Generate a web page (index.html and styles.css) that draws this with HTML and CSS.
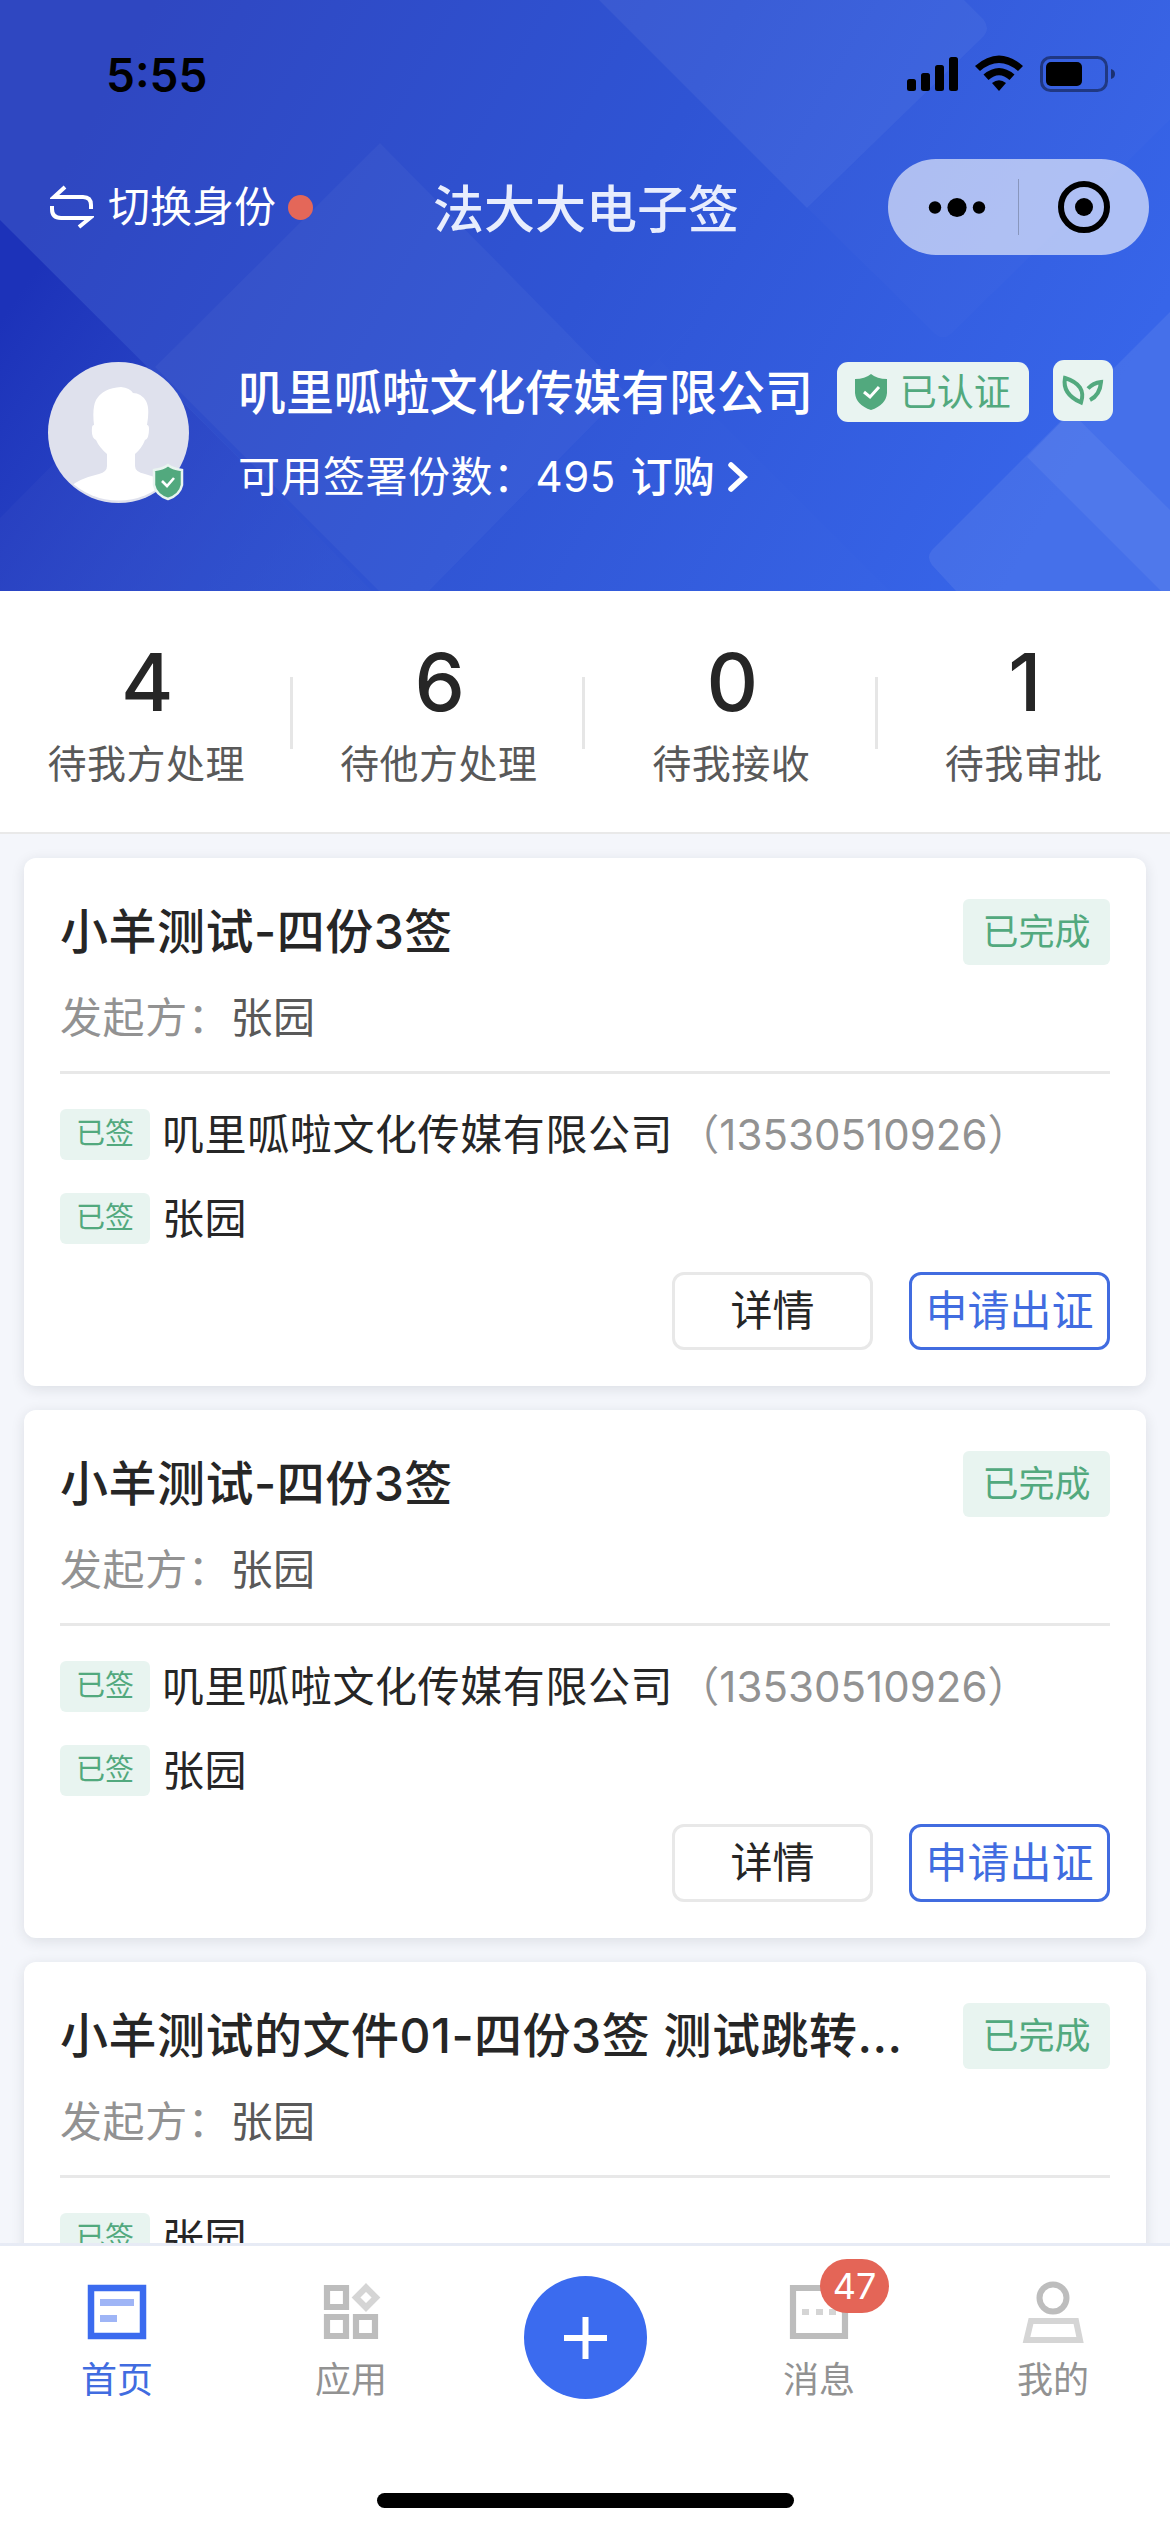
FILE: index.html
```html
<!DOCTYPE html>
<html lang="zh-CN">
<head>
<meta charset="utf-8">
<title>法大大电子签</title>
<link rel="stylesheet" href="styles.css">
</head>
<body>
<div class="screen">
  <header class="hero">
    <svg class="hero-bg" viewBox="0 0 1170 591" preserveAspectRatio="none" aria-hidden="true">
      <defs>
        <linearGradient id="sky" gradientUnits="userSpaceOnUse" x1="100" y1="100" x2="1000" y2="600">
          <stop offset="0" stop-color="#2f47c1"/>
          <stop offset=".5" stop-color="#2f54d4"/>
          <stop offset="1" stop-color="#3765e9"/>
        </linearGradient>
        <linearGradient id="deep" gradientUnits="userSpaceOnUse" x1="0" y1="320" x2="340" y2="560">
          <stop offset="0" stop-color="#1c32b9"/>
          <stop offset="1" stop-color="#2a4bcd" stop-opacity=".3"/>
        </linearGradient>
      </defs>
      <rect width="1170" height="591" fill="url(#sky)"/>
      <path d="M0 220 372 591H0z" fill="url(#deep)"/>
      <path d="M0 518 149 367 372 591H0z" fill="#fff" fill-opacity=".025"/>
      <path d="M380 143 155 367 379 591H429L625 392z" fill="#fff" fill-opacity=".035"/>
      <path d="M807 208 429 591H890L660 360z" fill="#fff" fill-opacity=".008"/>
      <path d="M599 0 807 208 982 38Q991 30 984 20L964 0z" fill="#fff" fill-opacity=".055"/>
      <path d="M807 208 935 334Q943 341 951 334L1170 120V0H964L984 20Q991 30 982 38z" fill="#fff" fill-opacity=".014"/>
      <path d="M1170 312 932 550Q926 557 932 565L956 591H1170z" fill="#fff" fill-opacity=".075"/>
      <path d="M1071 412 1027 457 1161 591H1170V510z" fill="#fff" fill-opacity=".06"/>
    </svg>

    <div class="status">
      <span class="clock">5:55</span>
      <svg class="signals" viewBox="0 0 210 40" width="210" height="40">
        <rect x="2" y="25" width="9" height="12" rx="2.5"/>
        <rect x="16" y="19" width="9" height="18" rx="2.5"/>
        <rect x="30" y="11" width="9" height="26" rx="2.5"/>
        <rect x="44" y="3" width="9" height="34" rx="2.5"/>
        <path d="M70 12Q94-9 118 12L113 17Q94 1 75 17z"/>
        <path d="M78.500 20.500Q94 7.500 109.500 20.500L104.500 26Q94 16.500 83.500 26z"/>
        <path d="M87 29Q94 23.500 101 29L94 37z"/>
        <rect x="136.500" y="3.500" width="65" height="33" rx="9" fill="none" stroke="#000" stroke-opacity=".42" stroke-width="3"/>
        <rect x="141" y="8" width="36" height="24" rx="5"/>
        <path d="M206 15Q210 16 210 20T206 25z" fill-opacity=".5"/>
      </svg>
    </div>

    <div class="navbar">
      <div class="switch">
        <svg viewBox="0 0 44 44" width="44" height="44" fill="none" stroke="#fff" stroke-width="4">
          <path d="M15 2 4 12H33Q41 12 41 20V24M2 21V24Q2 33 11 33H40L29 42"/>
        </svg>
        <span>切换身份</span>
        <i class="dot"></i>
      </div>
      <h1>法大大电子签</h1>
      <svg class="capsule" viewBox="0 0 261 96" width="261" height="96">
        <rect width="261" height="96" rx="48" fill="#fff" fill-opacity=".6"/>
        <circle cx="47" cy="48.500" r="6.200"/><circle cx="69" cy="48.500" r="9.600"/><circle cx="91" cy="48.500" r="6.200"/>
        <path d="M130.500 20V76" stroke="#000" stroke-opacity=".22"/>
        <circle cx="196" cy="48" r="23" fill="none" stroke="#000" stroke-width="6"/>
        <circle cx="196" cy="48" r="9"/>
      </svg>
    </div>

    <div class="profile">
      <svg class="avatar" viewBox="0 0 141 141" width="141" height="141">
        <defs><clipPath id="face"><circle cx="70.500" cy="68.500" r="70"/></clipPath></defs>
        <circle cx="70.500" cy="70.500" r="70.500" fill="#dfe1ed"/>
        <path clip-path="url(#face)" fill="#fff" d="M22 125Q30 117 51 112Q59 110 59 104V92Q51 85 48 78Q43 76 44 66Q44 63 46 63Q44 46 48 38Q55 26 73 25Q82 26 85 31Q93 31 98 39Q102 46 99 63Q101 63 101 67Q101 77 97 78Q94 86 87 92V104Q87 110 97 112Q115 117 123 125V141H22z"/>
        <path d="M120 103Q125 107 134 108V123Q132 133 120 137Q108 133 106 123V108Q115 107 120 103z" fill="#52a97e" stroke="#e9f4f0" stroke-width="2.500"/>
        <path d="m114 119 5 5 7-8" fill="none" stroke="#fff" stroke-width="2.600"/>
      </svg>
      <div class="who">
        <div class="org">
          <strong>叽里呱啦文化传媒有限公司</strong>
          <span class="verified">
            <svg viewBox="0 0 32 36" width="32" height="36"><path d="M16 0Q22 5 32 5V19Q31 31 16 36Q1 31 0 19V5Q10 5 16 0z" fill="#52a97e"/><path d="m9 18 6 5 9-10" fill="none" stroke="#fff" stroke-width="3"/></svg>
            <span>已认证</span>
          </span>
          <svg class="leaf" viewBox="0 0 60 61" width="60" height="61">
            <rect width="60" height="61" rx="11" fill="#e9f4f1"/>
            <g fill="none" stroke="#52a97e" stroke-width="4">
              <path d="M12 18Q9 34 28 42.500Q34 25 12 18z"/>
              <path d="M35 28.500Q40 23 48 22Q47 35 37 40"/>
            </g>
          </svg>
        </div>
        <div class="quota">可用签署份数：<span class="left">495</span><b>订购</b>
          <svg viewBox="0 0 20 30" width="20" height="30"><path d="m3 3 13 12L3 27" fill="none" stroke="#fff" stroke-width="5.500" stroke-linecap="round"/></svg>
        </div>
      </div>
    </div>
  </header>

  <section class="stats">
    <div class="stat"><b>4</b><span>待我方处理</span></div>
    <div class="stat"><b>6</b><span>待他方处理</span></div>
    <div class="stat"><b>0</b><span>待我接收</span></div>
    <div class="stat"><b>1</b><span>待我审批</span></div>
  </section>

  <main class="list">
    <article class="card">
      <div class="head"><h2>小羊测试-四份3签</h2><span class="state">已完成</span></div>
      <p class="from">发起方：<span>张园</span></p>
      <ul class="signers">
        <li><i>已签</i><span>叽里呱啦文化传媒有限公司<em>（13530510926）</em></span></li>
        <li><i>已签</i><span>张园</span></li>
      </ul>
      <div class="actions"><button>详情</button><button class="primary">申请出证</button></div>
    </article>
    <article class="card">
      <div class="head"><h2>小羊测试-四份3签</h2><span class="state">已完成</span></div>
      <p class="from">发起方：<span>张园</span></p>
      <ul class="signers">
        <li><i>已签</i><span>叽里呱啦文化传媒有限公司<em>（13530510926）</em></span></li>
        <li><i>已签</i><span>张园</span></li>
      </ul>
      <div class="actions"><button>详情</button><button class="primary">申请出证</button></div>
    </article>
    <article class="card">
      <div class="head"><h2>小羊测试的文件01-四份3签 测试跳转...</h2><span class="state">已完成</span></div>
      <p class="from">发起方：<span>张园</span></p>
      <ul class="signers">
        <li><i>已签</i><span>张园</span></li>
      </ul>
    </article>
  </main>

  <nav class="tabs">
    <a class="tab active">
      <svg viewBox="0 0 66 66" width="66" height="66"><path d="M7 9H59V57H7z" fill="none" stroke="#3b6bef" stroke-width="6.500"/><path d="M16 20H50V27H16zM16 36H33V43H16z" fill="#9fb5f6"/></svg>
      首页
    </a>
    <a class="tab">
      <svg viewBox="0 0 66 66" width="66" height="66" fill="none" stroke="#bdbdbd" stroke-width="6.200"><path d="M9 9H28V28H9zM9 38H28V57H9zM38 38H57V57H38z"/><path d="m48 8.500 10 10-10 10-10-10z" stroke="#d5d5d5"/></svg>
      应用
    </a>
    <a class="add">
      <svg viewBox="0 0 123 123" width="123" height="123"><circle cx="61.500" cy="61.500" r="61.500" fill="#3b6bef"/><path d="M40 62H83M61.500 41V83" stroke="#fff" stroke-width="6"/></svg>
    </a>
    <a class="tab">
      <span class="icon">
        <svg viewBox="0 0 66 66" width="66" height="66"><path d="M7 9H59V57H7z" fill="none" stroke="#bdbdbd" stroke-width="6.200"/><path d="M16 30H23V36H16zM30 30H37V36H30zM43 30H50V36H43z" fill="#d5d5d5"/></svg>
        <span class="badge">47</span>
      </span>
      消息
    </a>
    <a class="tab">
      <svg viewBox="0 0 66 66" width="66" height="66" fill="none" stroke-width="6"><circle cx="33" cy="19" r="13.500" stroke="#bdbdbd"/><path d="M11 42H56L60 61H6.500z" stroke="#d5d5d5"/></svg>
      我的
    </a>
  </nav>
  <div class="home-area"><div class="home-bar"></div></div>
</div>
</body>
</html>
```
FILE: styles.css
```css
* { box-sizing: border-box; margin: 0; padding: 0; }

body {
  width: 1170px;
  font-family: Inter, "Noto Sans CJK SC", sans-serif;
  color: #262626;
}

i, em { font-style: normal; }
svg { display: block; flex: none; }

.screen {
  display: flex;
  flex-direction: column;
  height: 2532px;
  overflow: hidden;
  background: #f4f6fb;
}

/* header */
.hero {
  position: relative;
  flex: none;
  height: 591px;
  color: #fff;
}
.hero-bg { position: absolute; inset: 0; width: 100%; height: 100%; }
.status, .navbar, .profile { position: relative; display: flex; }

.status {
  height: 159px;
  padding: 54px 55px 0 106px;
  justify-content: space-between;
  color: #000;
}
.clock { font-size: 46px; font-weight: 600; line-height: 42px; }

.navbar {
  height: 96px;
  padding: 0 21px 0 50px;
  align-items: center;
  justify-content: space-between;
}
.switch { display: flex; align-items: center; width: 383px; font-size: 42px; line-height: 60px; }
.switch span { margin-left: 14px; }
.dot { width: 25px; height: 25px; margin-left: 12px; border-radius: 50%; background: #e46759; }
.navbar h1 { flex: 1; padding-top: 5px; font-size: 51px; font-weight: 500; line-height: 72px; color: #e8edfd; }

.profile { padding: 107px 57px 0 48px; gap: 49px; }
.who { flex: 1; }
.org { display: flex; align-items: center; height: 60px; }
.org strong { padding-top: 1px; font-size: 48px; font-weight: 500; line-height: 60px; letter-spacing: -.1px; }
.verified {
  display: flex;
  align-items: center;
  gap: 13px;
  width: 192px;
  height: 60px;
  margin-left: 24px;
  padding-left: 18px;
  border-radius: 11px;
  background: #e9f4f1;
  color: #52a97e;
  font-size: 37px;
}
.verified span { padding-bottom: 4px; }
.leaf { margin: -3px 0 0 auto; }
.quota { display: flex; align-items: center; margin-top: 25px; font-size: 42px; line-height: 60px; letter-spacing: .5px; }
.quota b { margin: 0 13px 0 15px; font-weight: 500; letter-spacing: 0; }

/* counters */
.stats {
  display: grid;
  grid-template-columns: repeat(4, 1fr);
  flex: none;
  height: 243px;
  border-bottom: 2px solid #e9e9e9;
  background: #fff;
}
.stat {
  display: flex;
  flex-direction: column;
  align-items: center;
  padding-top: 50px;
  background: linear-gradient(#e6e6e6, #e6e6e6) right 0 top 86px / 3px 72px no-repeat;
}
.stat:last-child { background: none; }
.stat b { font-size: 80px; font-weight: 500; line-height: 82px; letter-spacing: -2px; }
.stat span { margin-top: 13px; font-size: 39px; line-height: 56px; letter-spacing: .5px; color: #595959; }

/* document cards */
.list {
  display: flex;
  flex: 1;
  flex-direction: column;
  gap: 24px;
  min-height: 0;
  padding: 24px 24px 0;
  overflow: hidden;
}
.card {
  flex: none;
  height: 528px;
  padding: 41px 36px 36px;
  border-radius: 12px;
  background: #fff;
  box-shadow: 0 3px 14px rgba(30, 35, 50, .11);
}
.head { display: flex; align-items: center; justify-content: space-between; height: 66px; }
.head h2 { font-size: 48px; font-weight: 500; line-height: 66px; letter-spacing: .5px; white-space: nowrap; }
.state {
  width: 147px;
  height: 66px;
  border-radius: 6px;
  background: #e8f4f0;
  color: #52a97e;
  font-size: 36px;
  line-height: 66px;
  text-align: center;
}
.from {
  height: 109px;
  padding-top: 23px;
  border-bottom: 3px solid #e8e8e8;
  color: #929292;
  font-size: 42px;
  line-height: 60px;
  letter-spacing: .6px;
}
.from span { color: #595959; }
.signers { display: flex; flex-direction: column; gap: 33px; padding-top: 35px; list-style: none; }
.signers li { display: flex; align-items: center; height: 51px; font-size: 42px; letter-spacing: .6px; }
.signers li span { padding-bottom: 7px; }
.signers i {
  width: 90px;
  height: 51px;
  margin-right: 12px;
  border-radius: 6px;
  background: #e8f4f0;
  color: #52a97e;
  font-size: 29px;
  line-height: 49px;
  letter-spacing: 0;
  text-align: center;
}
.signers em { margin-left: 4px; color: #929292; letter-spacing: .05px; }
.actions { display: flex; justify-content: flex-end; gap: 36px; margin-top: 28px; }
.actions button {
  width: 201px;
  height: 78px;
  border: 3px solid #e8e8e8;
  border-radius: 12px;
  background: #fff;
  color: #262626;
  font: 42px/70px Inter, "Noto Sans CJK SC", sans-serif;
  white-space: nowrap;
}
.actions .primary { border-color: #416ce0; color: #416ce0; }

/* tab bar */
.tabs {
  display: grid;
  grid-template-columns: repeat(5, 1fr);
  flex: none;
  height: 190px;
  border-top: 3px solid #e7ebf5;
  background: #fff;
}
.tab {
  display: flex;
  flex-direction: column;
  align-items: center;
  gap: 9px;
  padding-top: 33px;
  color: #929292;
  font-size: 36px;
  line-height: 52px;
}
.tab.active { color: #416ce0; }
.icon { position: relative; }
.badge {
  position: absolute;
  left: 34px;
  top: -20px;
  width: 69px;
  height: 54px;
  border-radius: 27px;
  background: #e46557;
  color: #fff;
  font-size: 36px;
  line-height: 54px;
  text-align: center;
}
.add { display: flex; justify-content: center; padding-top: 30px; }
.home-area { flex: none; height: 99px; padding-top: 60px; background: #fff; }
.home-bar { width: 417px; height: 15px; margin: 0 auto; border-radius: 8px; background: #000; }
```
